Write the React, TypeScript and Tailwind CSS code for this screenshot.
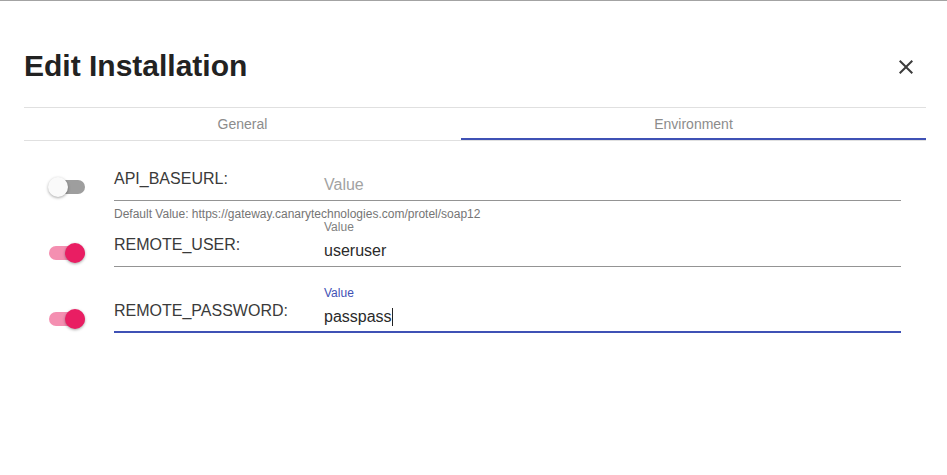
import React from 'react'

interface EnvVar {
  name: string
  value: string
  enabled: boolean
  focused?: boolean
  helper?: string
}

const vars: EnvVar[] = [
  {
    name: 'API_BASEURL:',
    value: '',
    enabled: false,
    helper: 'Default Value: https://gateway.canarytechnologies.com/protel/soap12',
  },
  { name: 'REMOTE_USER:', value: 'useruser', enabled: true },
  { name: 'REMOTE_PASSWORD:', value: 'passpass', enabled: true, focused: true },
]

const Toggle: React.FC<{ on: boolean }> = ({ on }) => (
  <div className="relative w-[37px] h-[20px] shrink-0">
    <div
      className={`absolute left-[1px] top-[3px] w-[36px] h-[14px] rounded-full ${
        on ? 'bg-[#f48fb1]' : 'bg-[#9e9e9e]'
      }`}
    />
    <div
      className={`absolute top-0 w-[20px] h-[20px] rounded-full shadow-[0_1px_3px_rgba(0,0,0,0.35)] ${
        on ? 'left-[17px] bg-[#e91e63]' : 'left-0 bg-[#fafafa]'
      }`}
    />
  </div>
)

const Row: React.FC<{ item: EnvVar }> = ({ item }) => (
  <div className="flex items-start">
    <div className="ml-6 mt-[24px]">
      <Toggle on={item.enabled} />
    </div>
    <div className="ml-[29px] flex-1 mr-[25px]">
      <div
        className={`flex border-b ${
          item.focused
            ? 'border-[#3f51b5] shadow-[inset_0_-1px_0_#3f51b5]'
            : 'border-[#949494]'
        }`}
      >
        <div className="w-[210px] pt-[16px] text-base leading-[19px] text-[#3a3a3a]">{item.name}</div>
        <div className="flex-1">
          <div
            className={`h-[16px] text-xs leading-[16px] ${
              item.focused ? 'text-[#3f51b5]' : 'text-[#808080]'
            }`}
          >
            {item.value ? 'Value' : ''}
          </div>
          <div className="py-[6px] text-base leading-[19px]">
            {item.value ? (
              <span className="text-[#2a2a2a]">
                {item.value}
                {item.focused && (
                  <span className="inline-block w-px h-[18px] bg-[#222] align-[-4px]" />
                )}
              </span>
            ) : (
              <span className="text-[#a2a2a2]">Value</span>
            )}
          </div>
        </div>
      </div>
      <div className="h-[18px] pt-[6px] text-xs leading-[14px] text-[#757575]">{item.helper}</div>
    </div>
  </div>
)

export default function App() {
  return (
    <div className="min-h-[475px] bg-white border-t border-[#a3a3a3] font-['Liberation_Sans',Arial,sans-serif]">
      <div className="pl-6 pr-[21px]">
        <div className="flex items-center justify-between pt-[47px]">
          <h1 className="text-[30px] leading-[36px] font-bold text-[#222]">Edit Installation</h1>
          <svg viewBox="0 0 24 24" className="w-6 h-6 mr-2 mt-[2px] fill-[#3c3c3c]">
            <path d="M19 6.41L17.59 5 12 10.59 6.41 5 5 6.41 10.59 12 5 17.59 6.41 19 12 13.41 17.59 19 19 17.59 13.41 12z" />
          </svg>
        </div>
        <div className="mt-[23px] flex border-t border-b border-[#e0e0e0] text-sm text-[#8c8c8c]">
          <div className="w-[437px] h-[32px] flex items-center justify-center">General</div>
          <div className="flex-1 h-[32px] flex items-center justify-center border-b-2 border-[#3f51b5] pt-[2px]">
            Environment
          </div>
        </div>
        <div className="mt-[12px]">
          {vars.map((v) => (
            <Row key={v.name} item={v} />
          ))}
        </div>
      </div>
    </div>
  )
}
